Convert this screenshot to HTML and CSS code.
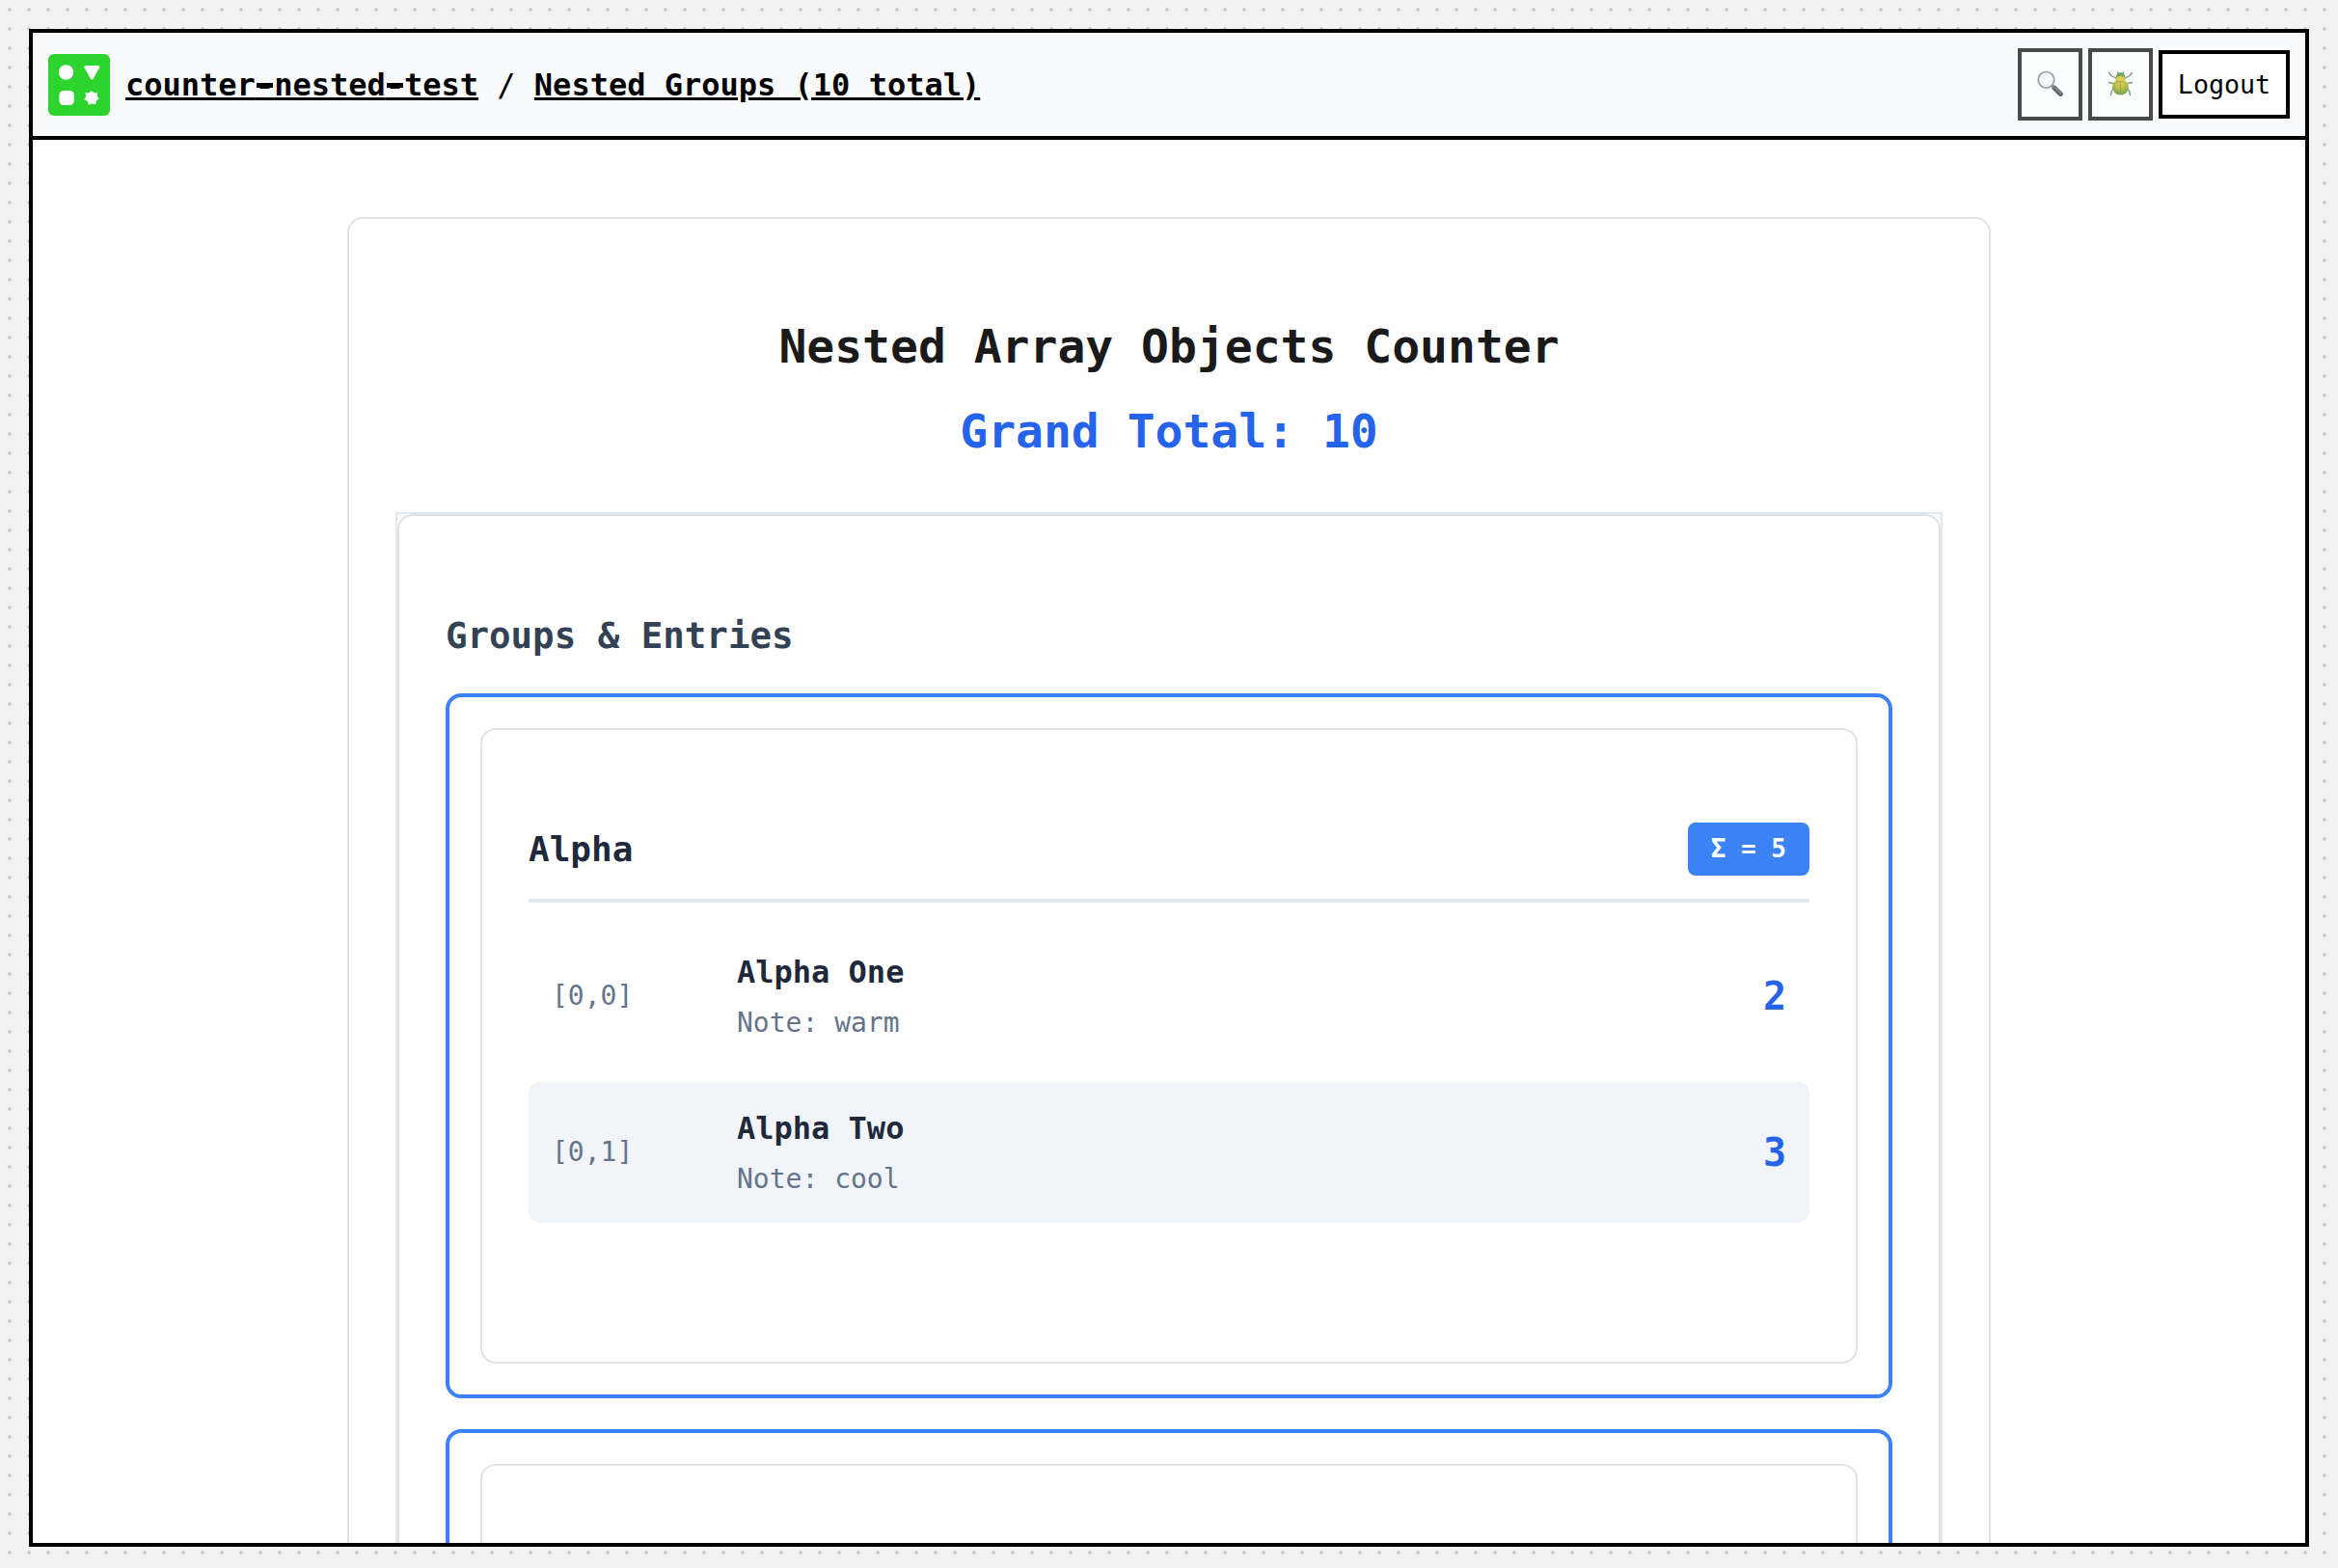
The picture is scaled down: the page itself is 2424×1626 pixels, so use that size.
FILE: index.html
```html
<!DOCTYPE html>
<html lang="en">
<head>
<meta charset="utf-8">
<title>Nested Groups (10 total)</title>
<link rel="stylesheet" href="styles.css">
</head>
<body>
<div class="frame">
  <header class="topbar">
    <svg class="logo" viewBox="0 0 64 64" aria-hidden="true">
      <rect width="64" height="64" rx="6" fill="#2dd42d"/>
      <circle cx="18.5" cy="19" r="7.7" fill="#fff"/>
      <path d="M38.800 13.500H51.800L45.300 25Z" fill="#fff" stroke="#fff" stroke-width="3" stroke-linejoin="round"/>
      <rect x="11.400" y="38" width="15.400" height="15" rx="4.500" fill="#fff"/>
      <path d="M45 38.800L47.200 41L50.600 40.800L50 43.800L52 46.200L49.400 47.800L48.700 51.600L45.500 50.600L42.300 52L41.300 48.600L38 47L40 44L39 40.800L42.600 41Z" fill="#fff" stroke="#fff" stroke-width="1.200" stroke-linejoin="round"/>
    </svg>
    <nav class="crumbs"><a href="#">counter<span class="dash">-</span>nested<span class="dash">-</span>test</a><span class="sep"> / </span><a href="#">Nested Groups (10 total)</a></nav>
    <div class="actions">
      <button class="icon-btn" aria-label="Search">
        <svg viewBox="0 0 27 27" aria-hidden="true">
          <path d="M17.800 18L24.300 24.500" stroke="#24272c" stroke-width="5" stroke-linecap="round"/>
          <path d="M18.500 17.600L24.500 23.600" stroke="#6d7178" stroke-width="1.200" stroke-linecap="round"/>
          <path d="M14.500 14.500L17.500 17.500" stroke="#555a62" stroke-width="2.400"/>
          <circle cx="9.500" cy="9.800" r="8.300" fill="#f3f5f8" stroke="#70777f" stroke-width="1.700"/>
        </svg>
      </button>
      <button class="icon-btn" aria-label="Debug">
        <svg viewBox="0 0 27 27" aria-hidden="true">
          <defs>
            <radialGradient id="shell" cx=".5" cy=".3" r=".7">
              <stop offset="0" stop-color="#dcbc00"/>
              <stop offset=".5" stop-color="#97a800"/>
              <stop offset="1" stop-color="#2d7a10"/>
            </radialGradient>
          </defs>
          <g fill="none" stroke="#3c7c34" stroke-width="1.300" stroke-linecap="round">
            <path d="M9 8L4.500 6L1.500 2.500M18 8L22.500 6L25.500 2.500"/>
            <path d="M6 13.500L1.500 12.500M21 13.500L25.500 12.500"/>
            <path d="M7 18L4.500 21L3.500 25.500M20 18L22.500 21L23.500 25.500"/>
            <path d="M11.500 4L10.500 1.800M15.500 4L16.500 1.800"/>
          </g>
          <ellipse cx="13.500" cy="6.500" rx="4.600" ry="4.300" fill="#357a20"/>
          <ellipse cx="13.500" cy="17.300" rx="8.300" ry="8.300" fill="url(#shell)"/>
          <ellipse cx="13.500" cy="8.600" rx="4.700" ry="2.900" fill="#dcb800" stroke="#62851a" stroke-width=".6"/>
          <path d="M13.500 11.500V25" stroke="#77700a" stroke-width=".8"/>
        </svg>
      </button>
      <button class="logout">Logout</button>
    </div>
  </header>
  <main class="content">
    <section class="card page">
      <h2 class="title">Nested Array Objects Counter</h2>
      <h2 class="total">Grand Total: 10</h2>
      <div class="panel">
        <div class="card groups">
          <h3 class="groups-title">Groups &amp; Entries</h3>
          <div class="group">
            <div class="card group-card">
              <div class="group-head"><span class="group-name">Alpha</span><span class="badge">Σ = 5</span></div>
              <div class="entry">
                <span class="index">[0,0]</span>
                <div class="info"><div class="name">Alpha One</div><div class="note">Note: warm</div></div>
                <span class="value">2</span>
              </div>
              <div class="entry alt">
                <span class="index">[0,1]</span>
                <div class="info"><div class="name">Alpha Two</div><div class="note">Note: cool</div></div>
                <span class="value">3</span>
              </div>
            </div>
          </div>
          <div class="group">
            <div class="card group-card"></div>
          </div>
        </div>
      </div>
    </section>
  </main>
</div>
</body>
</html>
```
FILE: styles.css
```css
* { box-sizing: border-box; }

body {
  margin: 0;
  height: 1626px;
  padding: 30px 30px 22px;
  overflow: hidden;
  background: #f2f2f2 radial-gradient(circle, #ccc 2px, transparent 2px) 0 0 / 20px 20px;
  font: 32px/1.2 "DejaVu Sans Mono", monospace;
  color: #000;
}

.frame {
  display: flex;
  flex-direction: column;
  height: 1574px;
  border: 4px solid #000;
  background: #fff;
  overflow: hidden;
}

.topbar {
  display: flex;
  flex: none;
  align-items: center;
  height: 111px;
  padding: 0 16px;
  border-bottom: 4px solid #000;
  background: #f8fafc;
}

.logo { width: 64px; height: 64px; margin-right: 16px; }

.crumbs { flex: 1; white-space: pre; line-height: 38px; }
.crumbs a {
  color: #000;
  font-weight: 700;
  text-decoration: underline;
  text-decoration-thickness: 3px;
}
.dash { background: linear-gradient(#000, #000) center 17px / 17px 5px no-repeat; }

.actions { display: flex; align-items: center; gap: 6px; }
.actions button {
  margin: 0;
  border: 4px solid #000;
  background: #fff;
  color: #000;
  font: 26.667px/31px "DejaVu Sans Mono", monospace;
}
.actions .icon-btn {
  display: flex;
  align-items: center;
  justify-content: center;
  width: 67px;
  height: 75px;
  padding: 0 0 2px;
  opacity: .7;
}
.icon-btn svg { width: 27px; height: 27px; }
.actions .logout { width: 136px; height: 71px; padding: 0; }

.content { padding: 80px 0 0 326px; }

.card { border: 2px solid #e2e2e2; border-radius: 16px; background: #fff; }

.page { width: 1704px; height: 2400px; padding: 104px 48px 48px; }

.title, .total {
  margin: 0;
  font-size: 48px;
  line-height: 56px;
  text-align: center;
}
.title { color: #1a1a1a; }
.total { margin-top: 32px; color: #2563eb; }

.panel { margin-top: 56px; border: 2px solid #e2e8f0; background: #f8fafc; }

.groups { height: 2000px; padding: 102px 48px 48px; }
.groups-title {
  margin: 0 0 38px;
  color: #334155;
  font-size: 37.44px;
  line-height: 44px;
}

.group {
  height: 731px;
  margin-bottom: 32px;
  padding: 32px;
  border: 4px solid #3b82f6;
  border-radius: 16px;
  background: #fff;
}
.group-card { height: 659px; padding: 96px 48px 48px; }

.group-head {
  display: flex;
  align-items: center;
  justify-content: space-between;
  height: 83px;
  margin-bottom: 24px;
  padding-bottom: 24px;
  border-bottom: 4px solid #e2e8f0;
}
.group-name { color: #1e293b; font-size: 36px; font-weight: 700; }
.badge {
  padding: 12px 24px;
  border-radius: 8px;
  background: #3b82f6;
  color: #fff;
  font-size: 26px;
  font-weight: 700;
  line-height: 31px;
}

.entry {
  display: grid;
  grid-template-columns: 160px 1fr auto;
  gap: 32px;
  align-items: center;
  height: 146px;
  margin-bottom: 16px;
  padding: 0 24px;
  border-radius: 12px;
}
.alt { background: #f1f5f9; }
.index { color: #64748b; font-size: 28px; }
.info { padding-top: 3px; }
.name { color: #1e293b; font-weight: 700; line-height: 38px; }
.note { margin-top: 15px; color: #64748b; font-size: 28px; line-height: 38px; }
.value { color: #2563eb; font-size: 40px; font-weight: 700; }
```
